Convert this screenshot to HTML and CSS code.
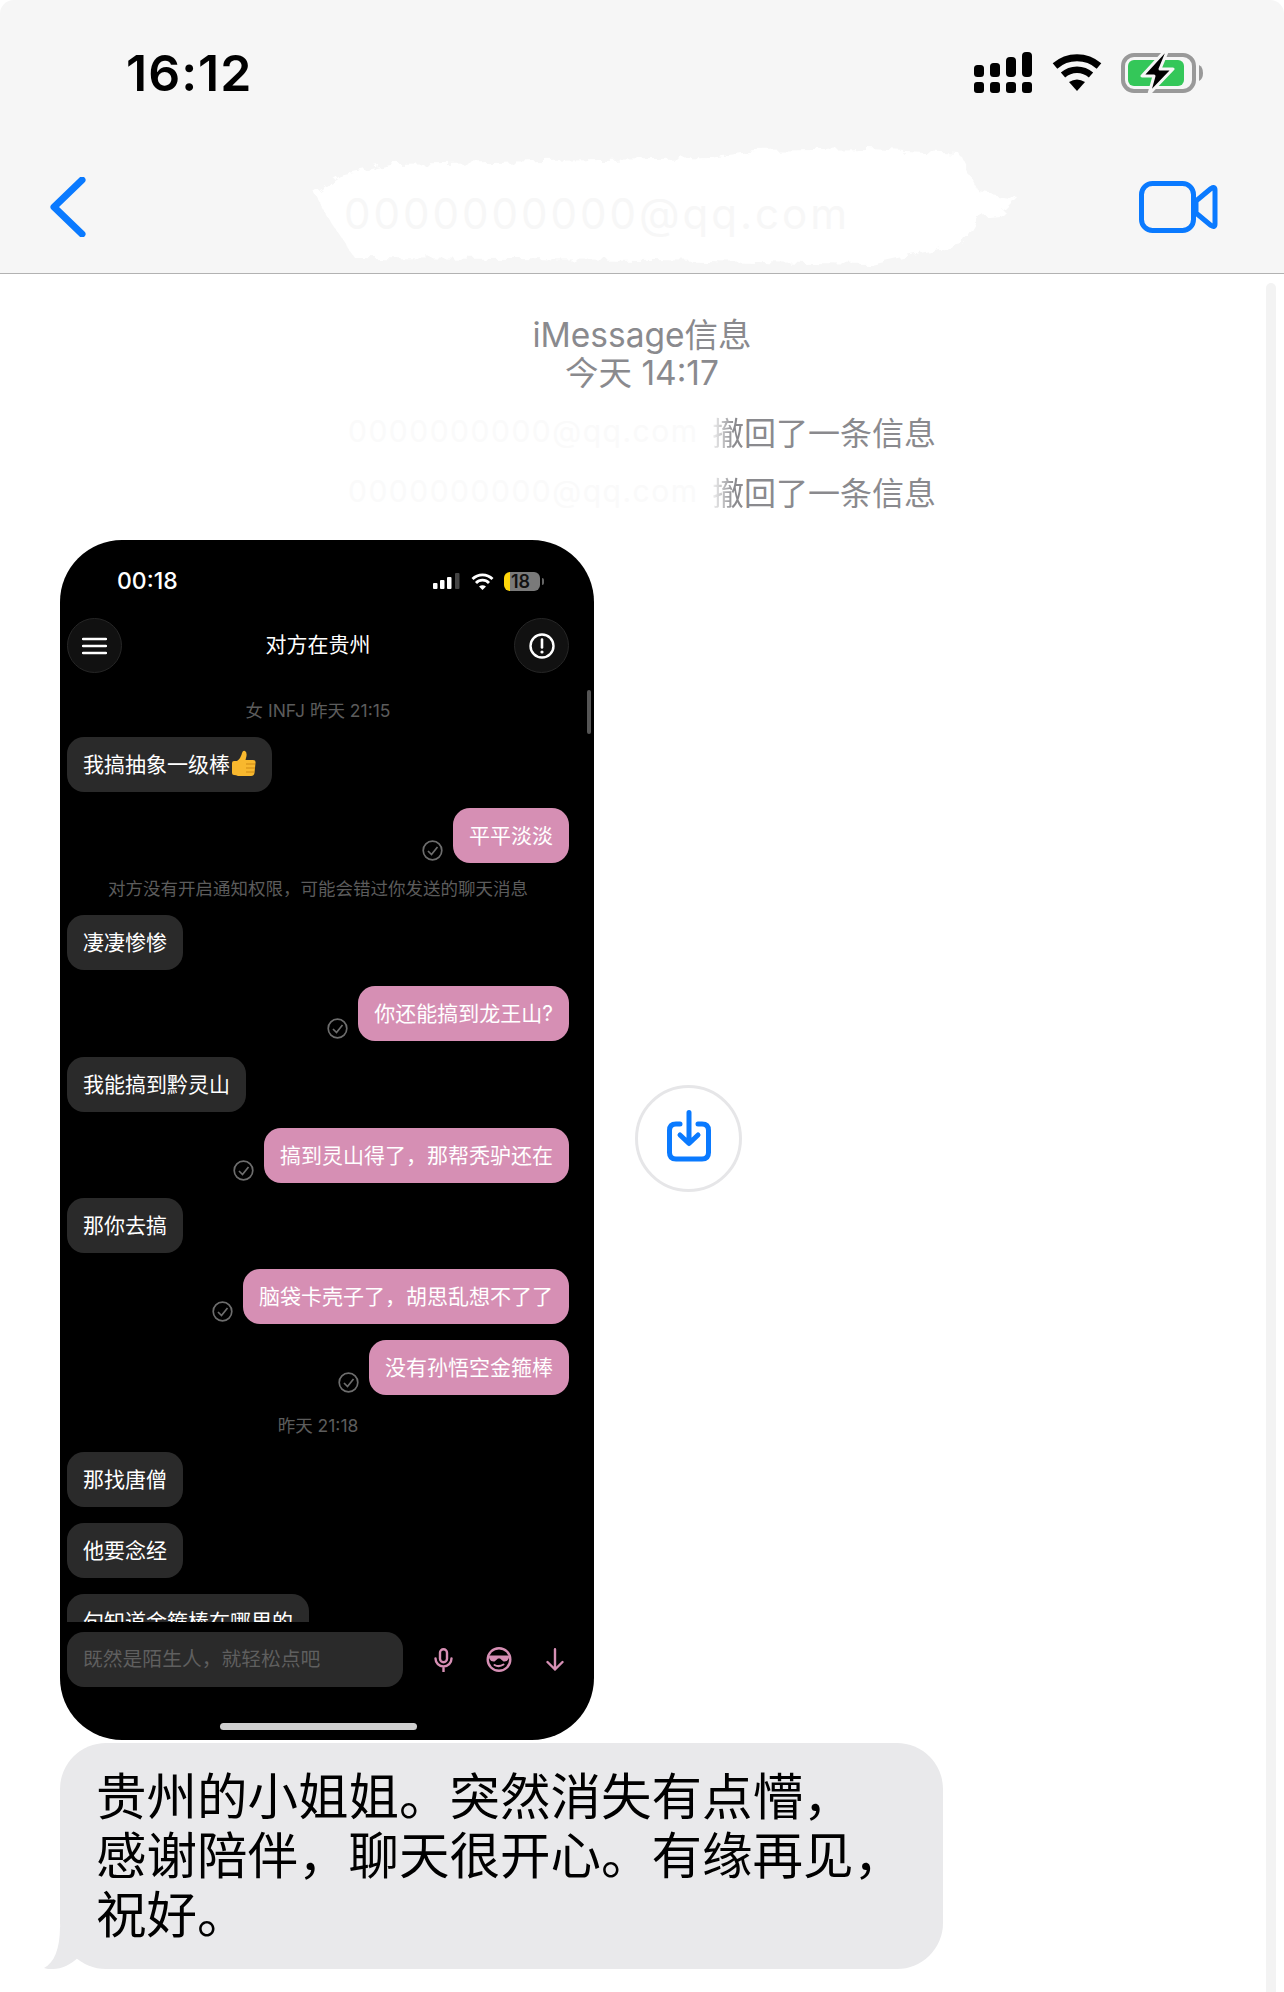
FILE: index.html
```html
<!DOCTYPE html>
<html lang="zh-CN">
<head>
    <meta charset="UTF-8">
    <title>iMessage信息</title>
    <link rel="stylesheet" href="styles.css">
</head>
<body>
    <div class="screen">
        <header class="top">
            <div class="statusbar">
                <span class="clock">16:12</span>
                <div class="status-icons">
                    <svg class="signal" width="59" height="41" viewBox="0 0 59 41">
                        <rect x="0" y="13" width="10" height="12" rx="3.5"/>
                        <rect x="16" y="11" width="10" height="14" rx="3.5"/>
                        <rect x="32" y="5" width="10" height="20" rx="4"/>
                        <rect x="48" y="0" width="10" height="25" rx="4"/>
                        <rect x="0" y="30" width="10" height="11" rx="3"/>
                        <rect x="16" y="30" width="10" height="11" rx="3"/>
                        <rect x="32" y="30" width="10" height="11" rx="3"/>
                        <rect x="48" y="30" width="10" height="11" rx="3"/>
                    </svg>
                    <svg class="wifi" width="50" height="37" viewBox="0 0 50 37">
                        <path d="M3 12A33.500 33.500 0 0 1 47 12" fill="none" stroke="#000" stroke-width="7"/>
                        <path d="M11 21A21 21 0 0 1 39 21" fill="none" stroke="#000" stroke-width="6.500"/>
                        <path d="M17 28Q25 23 33 28L25 37Z"/>
                    </svg>
                    <svg class="battery" width="83" height="42" viewBox="0 0 83 42">
                        <rect x="2" y="3" width="71" height="36" rx="11" fill="none" stroke="#999" stroke-width="4"/>
                        <rect x="7" y="8" width="56" height="26" rx="6" fill="#34c759"/>
                        <path d="M78 13Q82 15 82 21Q82 27 78 29Z" fill="#999"/>
                        <path d="M43 0L21 24H33L28 42L52 17H39L46 0Z" stroke="#f6f6f6" stroke-width="3" stroke-linejoin="round"/>
                    </svg>
                </div>
            </div>
            <nav class="navbar">
                <svg class="back" width="36" height="60" viewBox="0 0 36 60">
                    <path d="M32 3L4 30L32 57" fill="none" stroke="#0a7aff" stroke-width="7" stroke-linecap="round" stroke-linejoin="round"/>
                </svg>
                <svg class="video" width="79" height="52" viewBox="0 0 79 52">
                    <rect x="2.500" y="2.500" width="52" height="47" rx="11" fill="none" stroke="#0a7aff" stroke-width="5"/>
                    <path d="M57 20L72 7.500Q76 5 76 9V43Q76 47 72 44.500L57 32Z" fill="none" stroke="#0a7aff" stroke-width="5" stroke-linejoin="round"/>
                </svg>
            </nav>
            <!-- 地址被涂白的那一块，边缘做成毛刺 -->
            <div class="smear">
                <svg width="720" height="125" viewBox="0 0 720 125">
                    <filter id="rough" x="-5%" y="-10%" width="110%" height="120%">
                        <feTurbulence type="fractalNoise" baseFrequency="0.09" numOctaves="3" seed="4"/>
                        <feDisplacementMap in="SourceGraphic" scale="12"/>
                    </filter>
                    <path filter="url(#rough)" d="M5 48L30 30L85 18L235 15L400 12L445 5L560 3L650 8L668 45L708 52L690 70L668 72L652 98L560 118L345 114L45 112L22 78Z" fill="#fff"/>
                </svg>
                <span class="smear-text">0000000000@qq.com</span>
            </div>
        </header>

        <main class="thread">
            <div class="info">
                <div class="info-line">iMessage信息</div>
                <div class="info-line">今天 14:17</div>
            </div>
            <div class="recall"><span class="recall-who">0000000000@qq.com</span><span class="recall-cut">撤</span>回了一条信息</div>
            <div class="recall"><span class="recall-who">0000000000@qq.com</span><span class="recall-cut">撤</span>回了一条信息</div>

            <div class="shot-row">
                <div class="phone">
                    <div class="phone-status">
                        <span class="phone-clock">00:18</span>
                        <div class="phone-icons">
                            <svg width="28" height="16" viewBox="0 0 28 16">
                                <rect x="0" y="10" width="4.500" height="6" rx="1" fill="#fff"/>
                                <rect x="7" y="7" width="4.500" height="9" rx="1" fill="#fff"/>
                                <rect x="14" y="4" width="4.500" height="12" rx="1" fill="#fff"/>
                                <rect x="22" y="0" width="4.500" height="16" rx="1" fill="#444"/>
                            </svg>
                            <svg width="23" height="17" viewBox="0 0 23 17">
                                <path d="M1.500 6A14 14 0 0 1 21.500 6" fill="none" stroke="#fff" stroke-width="2.800"/>
                                <path d="M5 10A9 9 0 0 1 18 10" fill="none" stroke="#fff" stroke-width="2.800"/>
                                <path d="M8 13.500Q11.500 11 15 13.500L11.500 17Z" fill="#fff"/>
                            </svg>
                            <div class="phone-battery"><span class="phone-charge">18</span></div>
                        </div>
                    </div>
                    <div class="phone-nav">
                        <div class="round-btn">
                            <svg width="25" height="18" viewBox="0 0 25 18">
                                <path d="M1 2H24M1 9H24M1 16H24" stroke="#fff" stroke-width="2.400" stroke-linecap="round"/>
                            </svg>
                        </div>
                        <span class="phone-title">对方在贵州</span>
                        <div class="round-btn">
                            <svg width="26" height="26" viewBox="0 0 26 26">
                                <circle cx="13" cy="13" r="11.500" fill="none" stroke="#fff" stroke-width="2.400"/>
                                <path d="M13 6.500V14.500" stroke="#fff" stroke-width="2.600" stroke-linecap="round"/>
                                <circle cx="13" cy="19" r="1.600" fill="#fff"/>
                            </svg>
                        </div>
                    </div>
                    <div class="chat">
                        <div class="stamp">女 INFJ 昨天 21:15</div>
                        <div class="msg in">我搞抽象一级棒<svg class="thumb" width="25" height="26" viewBox="0 0 25 26">
                            <path d="M1 13Q1 11 3 11H6Q10 8 11 3Q12 0 14 1Q16 2 15.500 6L14.500 10H22Q25 10 24.500 13L23.500 23Q23 26 20 26H7Q5 25 3 25Q1 25 1 23Z" fill="#f8b82e"/>
                            <path d="M15 14H24M15 18H24M15 22H23" stroke="#cf8a14" stroke-width="1.200"/>
                        </svg></div>
                        <div class="msg out"><svg class="tick" width="21" height="21" viewBox="0 0 21 21"><circle cx="10.500" cy="10.500" r="9.300" fill="none" stroke="#6d6d6d" stroke-width="1.700"/><path d="M6 11L9.500 14.500L15.500 7" fill="none" stroke="#6d6d6d" stroke-width="1.700"/></svg><span class="bubble">平平淡淡</span></div>
                        <div class="stamp">对方没有开启通知权限，可能会错过你发送的聊天消息</div>
                        <div class="msg in">凄凄惨惨</div>
                        <div class="msg out"><svg class="tick" width="21" height="21" viewBox="0 0 21 21"><circle cx="10.500" cy="10.500" r="9.300" fill="none" stroke="#6d6d6d" stroke-width="1.700"/><path d="M6 11L9.500 14.500L15.500 7" fill="none" stroke="#6d6d6d" stroke-width="1.700"/></svg><span class="bubble">你还能搞到龙王山?</span></div>
                        <div class="msg in">我能搞到黔灵山</div>
                        <div class="msg out"><svg class="tick" width="21" height="21" viewBox="0 0 21 21"><circle cx="10.500" cy="10.500" r="9.300" fill="none" stroke="#6d6d6d" stroke-width="1.700"/><path d="M6 11L9.500 14.500L15.500 7" fill="none" stroke="#6d6d6d" stroke-width="1.700"/></svg><span class="bubble">搞到灵山得了，那帮秃驴还在</span></div>
                        <div class="msg in">那你去搞</div>
                        <div class="msg out"><svg class="tick" width="21" height="21" viewBox="0 0 21 21"><circle cx="10.500" cy="10.500" r="9.300" fill="none" stroke="#6d6d6d" stroke-width="1.700"/><path d="M6 11L9.500 14.500L15.500 7" fill="none" stroke="#6d6d6d" stroke-width="1.700"/></svg><span class="bubble">脑袋卡壳子了，胡思乱想不了了</span></div>
                        <div class="msg out"><svg class="tick" width="21" height="21" viewBox="0 0 21 21"><circle cx="10.500" cy="10.500" r="9.300" fill="none" stroke="#6d6d6d" stroke-width="1.700"/><path d="M6 11L9.500 14.500L15.500 7" fill="none" stroke="#6d6d6d" stroke-width="1.700"/></svg><span class="bubble">没有孙悟空金箍棒</span></div>
                        <div class="stamp stamp-time">昨天 21:18</div>
                        <div class="msg in">那找唐僧</div>
                        <div class="msg in">他要念经</div>
                        <div class="msg in">句知道金箍棒在哪里的</div>
                    </div>
                    <div class="scroll-thumb"></div>
                    <div class="composer">
                        <div class="composer-input">既然是陌生人，就轻松点吧</div>
                        <svg class="mic" width="19" height="24" viewBox="0 0 19 24">
                            <rect x="6" y="1.200" width="7" height="13" rx="3.500" fill="none" stroke="#d68fb4" stroke-width="2.400"/>
                            <path d="M1.500 10.500A8 8 0 0 0 17.500 10.500M9.500 18.500V24" fill="none" stroke="#d68fb4" stroke-width="2.400" stroke-linecap="round"/>
                        </svg>
                        <svg class="shades" width="26" height="25" viewBox="0 0 26 25">
                            <circle cx="13" cy="12.500" r="11.300" fill="none" stroke="#d68fb4" stroke-width="2.400"/>
                            <path d="M2.500 8.500H23.500L22.500 12Q21 15 17.500 14.500L14 11.500H12L8.500 14.500Q5 15 3.500 12Z" fill="#d68fb4"/>
                            <path d="M8.500 18Q13 20.500 17.500 17.500" fill="none" stroke="#d68fb4" stroke-width="2" stroke-linecap="round"/>
                        </svg>
                        <svg class="down" width="18" height="23" viewBox="0 0 18 23">
                            <path d="M9 1.200V21.500M1.500 14L9 21.500L16.500 14" fill="none" stroke="#d68fb4" stroke-width="2.400" stroke-linecap="round" stroke-linejoin="round"/>
                        </svg>
                    </div>
                    <div class="home-bar"></div>
                </div>
                <div class="save-btn">
                    <svg width="44" height="52" viewBox="0 0 44 52">
                        <path d="M13 14H9Q2.500 14 2.500 20.500V42.500Q2.500 49 9 49H35Q41.500 49 41.500 42.500V20.500Q41.500 14 35 14H31" fill="none" stroke="#0a7aff" stroke-width="5" stroke-linecap="round"/>
                        <path d="M22 2.500V33M13 25L22 33.500L31 25" fill="none" stroke="#0a7aff" stroke-width="5" stroke-linecap="round" stroke-linejoin="round"/>
                    </svg>
                </div>
            </div>

            <div class="text-bubble">
                贵州的小姐姐。突然消失有点懵，<br>感谢陪伴，聊天很开心。有缘再见，<br>祝好。
                <svg class="tail" width="50" height="50" viewBox="0 0 50 50">
                    <path d="M16 8C16 30 10 44 0 49C2 50 6 50 9 50C18 50 26 46 35 38L35 8Z" fill="#e9e9eb"/>
                </svg>
            </div>
        </main>
        <div class="page-scroll"></div>
    </div>
</body>
</html>
```

FILE: styles.css
```css
* {
    box-sizing: border-box;
}

body {
    margin: 0;
    background: #fff;
    font-family: Inter, "Noto Sans CJK SC", sans-serif;
}

.screen {
    position: relative;
    width: 1284px;
    height: 1992px;
    overflow: hidden;
}

/* top bar */
.top {
    position: relative;
    height: 274px;
    padding-top: 52px;
    background: #f6f6f6;
    border-bottom: 1px solid #b2b2b2;
    border-radius: 14px 14px 0 0;
}

.statusbar {
    display: flex;
    justify-content: space-between;
    align-items: center;
    height: 41px;
    padding: 0 80px 0 126px;
}

.clock {
    font-size: 50px;
    font-weight: 600;
    letter-spacing: 1px;
    color: #000;
}

.status-icons {
    display: flex;
    align-items: center;
    gap: 19px;
}

.navbar {
    display: flex;
    justify-content: space-between;
    align-items: center;
    padding: 0 66px 0 50px;
    margin-top: 82px;
    height: 64px;
}

.smear {
    position: absolute;
    left: 310px;
    top: 146px;
    width: 720px;
    height: 125px;
}

.smear svg {
    display: block;
}

.smear-text {
    position: absolute;
    left: 34px;
    top: 42px;
    font-size: 42px;
    letter-spacing: 3px;
    color: #f7f7f7;
    white-space: nowrap;
}

/* thread */
.thread {
    padding: 42px 0 0 60px;
}

.info {
    margin-left: -60px;
    color: #8a8a8e;
    font-size: 33.500px;
    line-height: 38px;
    text-align: center;
}

.recall {
    margin-left: -60px;
    height: 60px;
    display: flex;
    justify-content: center;
    align-items: center;
    color: #8a8a8e;
    font-size: 32px;
}

.info + .recall {
    margin-top: 9px;
}

.recall-who {
    width: 364px;
    font-size: 30px;
    letter-spacing: 1.500px;
    color: #fafafa;
    white-space: nowrap;
}

.recall-cut {
    background: linear-gradient(90deg, #f4f4f4 0%, #8a8a8e 70%);
    -webkit-background-clip: text;
    background-clip: text;
    color: transparent;
}

.shot-row {
    display: flex;
    align-items: center;
    gap: 41px;
    margin-top: 19px;
}

/* the embedded phone shot */
.phone {
    position: relative;
    width: 534px;
    height: 1200px;
    padding: 0 25px 0 7px;
    background: #000;
    border-radius: 62px;
    overflow: hidden;
}

.phone-status {
    display: flex;
    justify-content: space-between;
    align-items: center;
    height: 40px;
    margin-top: 21px;
    padding: 0 29px 0 50px;
}

.phone-clock {
    color: #fff;
    font-size: 23px;
    font-weight: 500;
}

.phone-icons {
    display: flex;
    align-items: center;
    gap: 10px;
}

.phone-battery {
    position: relative;
    width: 36px;
    height: 19px;
    border-radius: 6px;
    background: linear-gradient(90deg, #ffd60a 0, #ffd60a 6px, #7a7a7a 6px);
}

.phone-battery::after {
    content: "";
    position: absolute;
    left: 38px;
    top: 6px;
    width: 2px;
    height: 7px;
    border-radius: 0 2px 2px 0;
    background: #666;
}

.phone-charge {
    display: block;
    padding-left: 7px;
    color: #111;
    font-size: 18px;
    font-weight: 600;
    line-height: 19px;
}

.phone-nav {
    display: flex;
    justify-content: space-between;
    align-items: center;
    margin-top: 17px;
}

.round-btn {
    display: flex;
    justify-content: center;
    align-items: center;
    width: 55px;
    height: 55px;
    background: #111;
    border: 1px solid #262626;
    border-radius: 50%;
}

.phone-title {
    color: #fff;
    font-size: 21px;
    line-height: 26px;
    margin-bottom: 2px;
}

.chat {
    height: 923px;
    margin-top: 26px;
    overflow: hidden;
}

.stamp {
    height: 24px;
    margin-top: 14px;
    color: #5c5c5c;
    font-size: 17.500px;
    line-height: 24px;
    text-align: center;
    white-space: nowrap;
}

.stamp:first-child {
    margin-top: 0;
}

.stamp-time {
    margin-top: 19px;
}

.msg {
    display: flex;
    margin-top: 15.900px;
    color: #fff;
    font-size: 21px;
    line-height: 55px;
}

.stamp + .msg {
    margin-top: 14px;
}

.msg.in {
    width: max-content;
    height: 55px;
    align-items: center;
    padding: 0 16px;
    background: #2a2a2a;
    border-radius: 17px;
}

.thumb {
    margin-left: 1px;
    margin-top: -3px;
}

.msg.out {
    justify-content: flex-end;
    align-items: flex-end;
    gap: 10px;
}

.tick {
    margin-bottom: 2px;
}

.bubble {
    height: 55px;
    padding: 0 16px;
    background: #d68fb4;
    border-radius: 17px;
}

.scroll-thumb {
    position: absolute;
    left: 527px;
    top: 150px;
    width: 4px;
    height: 44px;
    border-radius: 2px;
    background: #555;
}

.composer {
    display: flex;
    align-items: center;
    margin-top: 10px;
}

.composer-input {
    width: 336px;
    height: 55px;
    padding: 0 16px;
    background: #2a2a2a;
    border-radius: 17px;
    color: #5f5f5f;
    font-size: 19.800px;
    line-height: 55px;
}

.mic {
    margin-left: 31px;
}

.shades {
    margin-left: 33px;
}

.down {
    margin-left: 34px;
}

.home-bar {
    width: 197px;
    height: 7px;
    margin: 36px auto 0;
    background: #cfcfcf;
    border-radius: 4px;
}

.save-btn {
    display: flex;
    justify-content: center;
    align-items: center;
    width: 107px;
    height: 107px;
    margin-top: -3px;
    padding-bottom: 5px;
    border: 3px solid #e6e6e8;
    border-radius: 50%;
}

.text-bubble {
    position: relative;
    width: 883px;
    height: 226px;
    margin-top: 3px;
    padding: 25px 0 0 36px;
    background: #e9e9eb;
    border-radius: 46px;
    color: #000;
    font-size: 50.500px;
    line-height: 58.800px;
}

.tail {
    position: absolute;
    left: -16px;
    bottom: 0;
}

.page-scroll {
    position: absolute;
    left: 1266px;
    top: 283px;
    bottom: 0;
    width: 10px;
    border-radius: 5px 5px 0 0;
    background: #f3f3f3;
}
```
